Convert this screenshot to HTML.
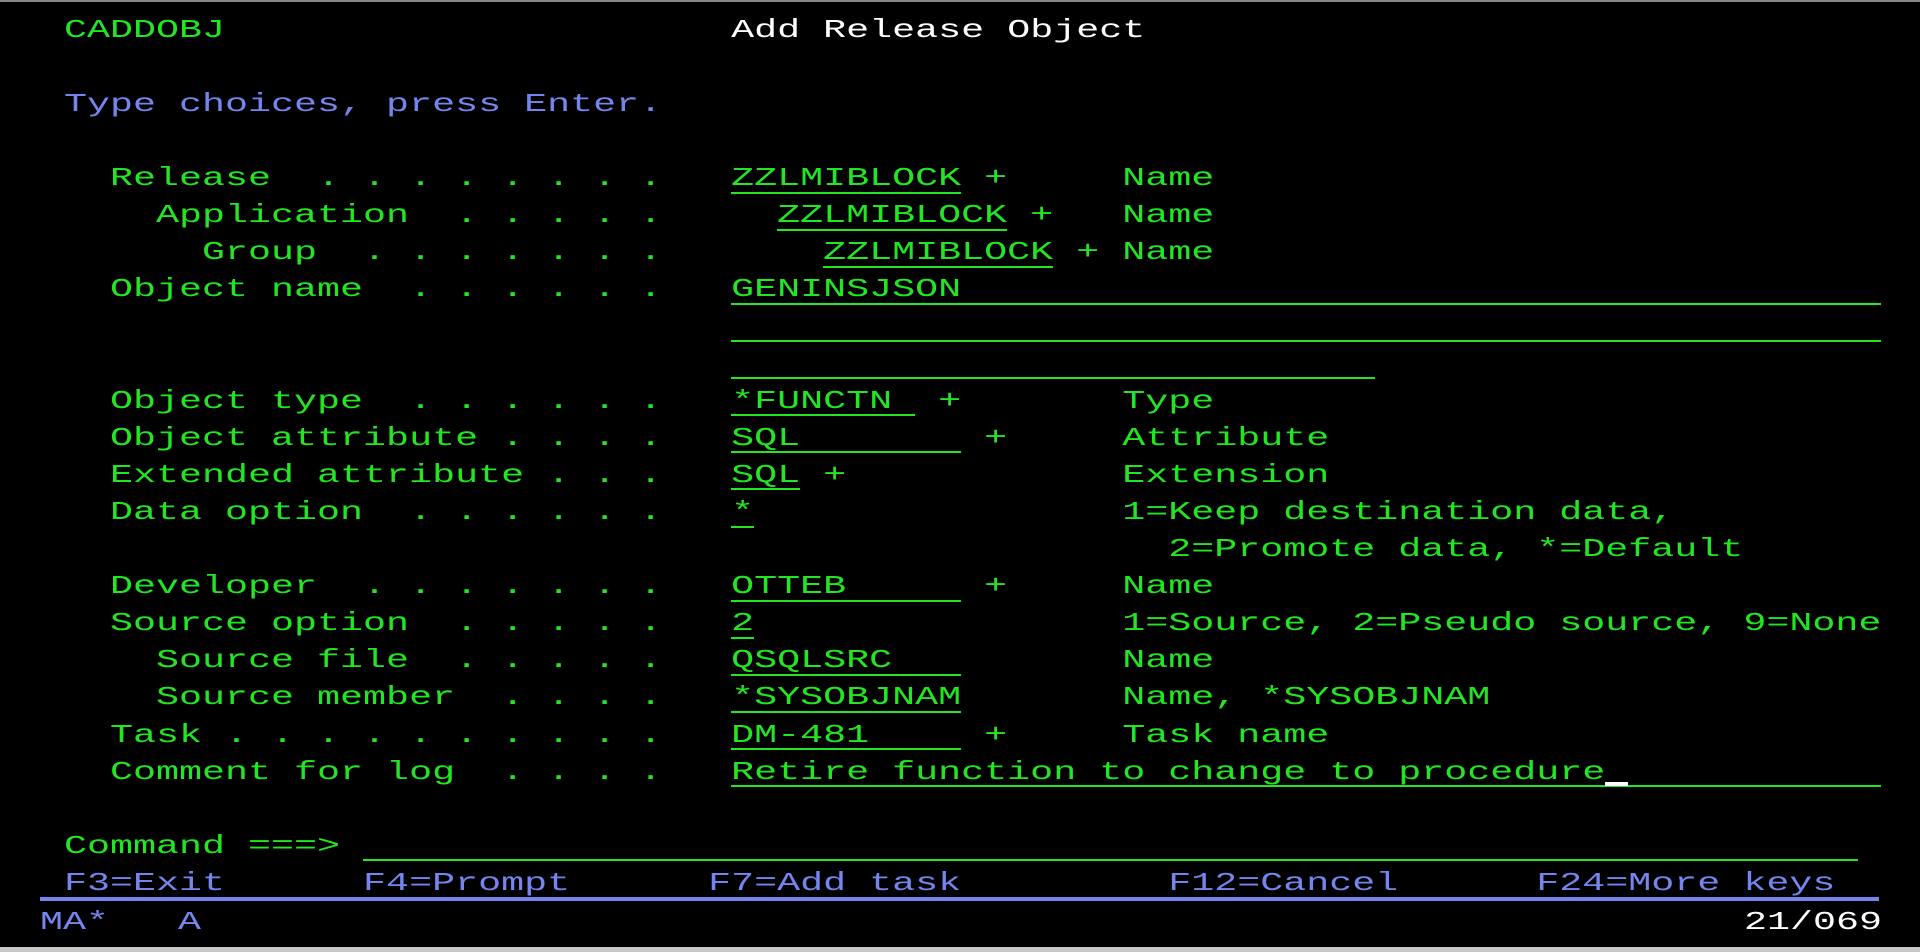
<!DOCTYPE html>
<html><head><meta charset="utf-8"><style>
html,body{margin:0;padding:0;background:#000;width:1920px;height:952px;overflow:hidden;position:relative}
.l{position:absolute;left:63.7px;white-space:pre;font-family:"Liberation Mono",monospace;font-size:26px;line-height:30px;transform:scaleX(1.4744);transform-origin:0 0;color:#22e622}
.w{color:#fff}.b{color:#7585ee}
.u{position:absolute;height:2px;background:#22e622}
</style></head><body>
<div style="position:absolute;left:0;top:0;width:1920px;height:2px;background:#888"></div>
<div class="l" style="top:14.6px">CADDOBJ                      <span class="w">Add Release Object</span></div>
<div class="l b" style="top:88.8px">Type choices, press Enter.</div>
<div class="l" style="top:163px">  Release  . . . . . . . .   ZZLMIBLOCK +     Name</div>
<div class="l" style="top:200.1px">    Application  . . . . .     ZZLMIBLOCK +   Name</div>
<div class="l" style="top:237.2px">      Group  . . . . . . .       ZZLMIBLOCK + Name</div>
<div class="l" style="top:274.3px">  Object name  . . . . . .   GENINSJSON</div>
<div class="l" style="top:385.6px">  Object type  . . . . . .   *FUNCTN  +       Type</div>
<div class="l" style="top:422.7px">  Object attribute . . . .   SQL        +     Attribute</div>
<div class="l" style="top:459.8px">  Extended attribute . . .   SQL +            Extension</div>
<div class="l" style="top:496.9px">  Data option  . . . . . .   *                1=Keep destination data,</div>
<div class="l" style="top:534px">                                                2=Promote data, *=Default</div>
<div class="l" style="top:571.1px">  Developer  . . . . . . .   OTTEB      +     Name</div>
<div class="l" style="top:608.2px">  Source option  . . . . .   2                1=Source, 2=Pseudo source, 9=None</div>
<div class="l" style="top:645.3px">    Source file  . . . . .   QSQLSRC          Name</div>
<div class="l" style="top:682.4px">    Source member  . . . .   *SYSOBJNAM       Name, *SYSOBJNAM</div>
<div class="l" style="top:719.5px">  Task . . . . . . . . . .   DM-481     +     Task name</div>
<div class="l" style="top:756.6px">  Comment for log  . . . .   Retire function to change to procedure</div>
<div class="l" style="top:830.8px">Command ===&gt;</div>
<div class="l b" style="top:867.9px">F3=Exit      F4=Prompt      F7=Add task         F12=Cancel      F24=More keys</div>

<div class="u" style="left:730.7px;top:191.6px;width:230px"></div>
<div class="u" style="left:776.7px;top:228.7px;width:230px"></div>
<div class="u" style="left:822.7px;top:265.8px;width:230px"></div>
<div class="u" style="left:730.7px;top:302.9px;width:1150px"></div>
<div class="u" style="left:730.7px;top:340px;width:1150px"></div>
<div class="u" style="left:730.7px;top:377.1px;width:644px"></div>
<div class="u" style="left:730.7px;top:414.2px;width:184px"></div>
<div class="u" style="left:730.7px;top:451.3px;width:230px"></div>
<div class="u" style="left:730.7px;top:488.4px;width:69px"></div>
<div class="u" style="left:730.7px;top:525.5px;width:23px"></div>
<div class="u" style="left:730.7px;top:599.7px;width:230px"></div>
<div class="u" style="left:730.7px;top:636.8px;width:23px"></div>
<div class="u" style="left:730.7px;top:673.9px;width:230px"></div>
<div class="u" style="left:730.7px;top:711px;width:230px"></div>
<div class="u" style="left:730.7px;top:748.1px;width:230px"></div>
<div class="u" style="left:730.7px;top:785.2px;width:1150px"></div>
<div style="position:absolute;left:1604.7px;top:782px;width:23px;height:4px;background:#fff"></div>
<div class="u" style="left:362.7px;top:859.4px;width:1495px"></div>

<div style="position:absolute;left:40px;top:897px;width:1839px;height:4px;background:#7585ee"></div>
<div class="l b" style="left:40px;top:907px">MA*   A</div>
<div class="l w" style="left:1744px;top:907px">21/069</div>
<div style="position:absolute;left:0;top:947px;width:1920px;height:5px;background:#c8c8c8"></div>
</body></html>
